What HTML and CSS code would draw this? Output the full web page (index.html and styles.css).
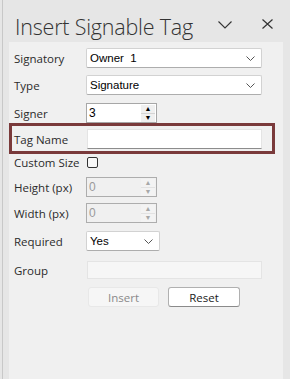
FILE: index.html
```html
<!DOCTYPE html>
<html lang="en">
<head>
    <meta charset="UTF-8">
    <meta name="viewport" content="width=device-width, initial-scale=1.0">
    <title>Insert Signable Tag</title>
    <link rel="stylesheet" href="styles.css">
</head>
<body>
  <div class="pane">
    <div class="header">
      <h1 class="title">Insert Signable Tag</h1>
      <span class="icon chevron">
        <svg width="14" height="8" viewBox="0 0 14 8"><polyline points="0.5,0.5 7,7 13.5,0.5" fill="none" stroke="#333" stroke-width="1.1"/></svg>
      </span>
      <span class="icon close">
        <svg width="11" height="10" viewBox="0 0 11 10"><path d="M0.5 0.5 L10.5 9.5 M10.5 0.5 L0.5 9.5" fill="none" stroke="#333" stroke-width="1.2"/></svg>
      </span>
    </div>

    <div class="panel">
      <div class="row r-signatory">
        <label class="lbl">Signatory</label>
        <div class="select wide"><span>Owner&nbsp; 1</span>
          <svg class="caret" width="9" height="5" viewBox="0 0 9 5"><polyline points="0.5,0.5 4.5,4.5 8.5,0.5" fill="none" stroke="#555" stroke-width="1"/></svg>
        </div>
      </div>
      <div class="row r-type">
        <label class="lbl">Type</label>
        <div class="select wide"><span>Signature</span>
          <svg class="caret" width="9" height="5" viewBox="0 0 9 5"><polyline points="0.5,0.5 4.5,4.5 8.5,0.5" fill="none" stroke="#555" stroke-width="1"/></svg>
        </div>
      </div>
      <div class="row r-signer">
        <label class="lbl">Signer</label>
        <div class="spin">
          <span class="val">3</span>
          <span class="spin-btns">
            <span class="up">&#9650;</span>
            <span class="down">&#9660;</span>
          </span>
        </div>
      </div>

      <div class="tagbox">
        <label class="lbl">Tag Name</label>
        <div class="textin"></div>
      </div>

      <div class="row r-custom">
        <label class="lbl">Custom Size</label>
        <span class="check"></span>
      </div>
      <div class="row r-height">
        <label class="lbl">Height (px)</label>
        <div class="spin disabled">
          <span class="val">0</span>
          <span class="spin-btns">
            <span class="up">&#9650;</span>
            <span class="down">&#9660;</span>
          </span>
        </div>
      </div>
      <div class="row r-width">
        <label class="lbl">Width (px)</label>
        <div class="spin disabled">
          <span class="val">0</span>
          <span class="spin-btns">
            <span class="up">&#9650;</span>
            <span class="down">&#9660;</span>
          </span>
        </div>
      </div>
      <div class="row r-required">
        <label class="lbl">Required</label>
        <div class="select short"><span>Yes</span>
          <svg class="caret" width="9" height="5" viewBox="0 0 9 5"><polyline points="0.5,0.5 4.5,4.5 8.5,0.5" fill="none" stroke="#555" stroke-width="1"/></svg>
        </div>
      </div>
      <div class="row r-group">
        <label class="lbl">Group</label>
        <div class="groupin"></div>
      </div>
      <div class="buttons">
        <button class="btn insert" disabled>Insert</button>
        <button class="btn reset">Reset</button>
      </div>
    </div>
  </div>
</body>
</html>
```

FILE: styles.css
```css
html, body {
    margin: 0;
    padding: 0;
    background-color: #e6e6e6;
    font-family: "Open Sans", "Noto Sans", sans-serif;
    color: #333;
  }

  .pane {
    margin-left: 2px;
    height: 379px;
    border-left: 1px solid #c8c8c8;
    display: flex;
    flex-direction: column;
    box-sizing: border-box;
  }

  .header {
    height: 42px;
    display: flex;
    align-items: flex-start;
  }

  .title {
    margin: 13px 0 0 12px;
    font-size: 21.5px;
    font-weight: 300;
    color: #333;
    letter-spacing: -0.2px;
    line-height: 28px;
    white-space: nowrap;
  }

  .icon {
    display: block;
    line-height: 0;
  }

  .chevron {
    margin: 21px 0 0 auto;
  }

  .close {
    margin: 19px 17px 0 30px;
  }

  .panel {
    margin-left: 6px;
    width: 274px;
    flex: 1;
    background-color: #f0f0f0;
    padding-top: 6px;
    box-sizing: border-box;
  }

  .row {
    display: flex;
    align-items: center;
    height: 20px;
    padding-left: 5px;
  }

  .lbl {
    width: 72px;
    font-size: 11.5px;
    color: #2b2b2b;
    white-space: nowrap;
  }

  .r-type { margin-top: 7px; }
  .r-signer { margin-top: 8px; }
  .r-custom { margin-top: 2px; height: 12px; }
  .r-height { margin-top: 9px; }
  .r-width { margin-top: 6px; }
  .r-required { margin-top: 8px; }
  .r-group { margin-top: 10px; height: 18px; }

  .select {
    height: 20px;
    box-sizing: border-box;
    background-color: #fff;
    border: 1px solid #d2d2d2;
    border-bottom-color: #adadad;
    border-radius: 2px;
    display: flex;
    align-items: center;
    padding-left: 3px;
    padding-right: 6px;
    font-family: "Liberation Sans", Arial, sans-serif;
    font-size: 11.5px;
    color: #000;
  }

  .select.wide { width: 176px; }
  .select.short { width: 74px; }

  .select .caret {
    margin-left: auto;
  }

  .spin {
    width: 71px;
    height: 20px;
    box-sizing: border-box;
    border: 1px solid #a7a7a7;
    background-color: #fff;
    display: flex;
    font-family: "Liberation Sans", Arial, sans-serif;
    font-size: 12px;
    color: #000;
  }

  .spin .val {
    flex: 1;
    padding-left: 2px;
    line-height: 18px;
  }

  .spin-btns {
    width: 14px;
    margin: 1px 1px 1px 0;
    display: flex;
    flex-direction: column;
  }

  .spin-btns span {
    flex: 1;
    font-size: 7px;
    line-height: 8px;
    text-align: center;
    background-color: #f0f0f0;
    border: 0 solid #d4d4d4;
    color: #000;
  }

  .spin-btns .up { border-bottom-width: 1px; }

  .spin.disabled {
    background-color: #f0f0f0;
    color: #9a9a9a;
    border-color: #adadad;
  }

  .spin.disabled .spin-btns span {
    color: #a8a8a8;
    background-color: #f3f3f3;
    border-color: #e2e2e2;
  }

  .tagbox {
    margin-top: 0;
    width: 266px;
    height: 31px;
    box-sizing: border-box;
    border: 3px solid #7a3a3b;
    display: flex;
    align-items: center;
    padding-left: 2px;
    padding-top: 1px;
  }

  .textin {
    width: 175px;
    height: 20px;
    box-sizing: border-box;
    margin-left: 1px;
    background-color: #fff;
    border: 1px solid #e4e4e4;
    border-bottom-color: #8c8c8c;
  }

  .check {
    width: 11px;
    height: 11px;
    margin-left: 1px;
    box-sizing: border-box;
    border: 1px solid #333;
    border-radius: 2px;
    background-color: #f8f8f8;
  }

  .groupin {
    width: 175px;
    height: 18px;
    margin-left: 1px;
    box-sizing: border-box;
    background-color: #f6f6f6;
    border: 1px solid #e4e4e4;
  }

  .buttons {
    margin-top: 8px;
    padding-left: 79px;
    display: flex;
    gap: 9px;
  }

  .btn {
    width: 72px;
    height: 20px;
    padding: 0;
    box-sizing: border-box;
    border-radius: 3px;
    font-family: "Open Sans", "Noto Sans", sans-serif;
    font-size: 11.5px;
  }

  .btn.insert {
    width: 71px;
    background-color: #f6f6f6;
    border: 1px solid #e8e8e8;
    color: #8a8a8a;
  }

  .btn.reset {
    background-color: #fff;
    border: 1px solid #b0b0b0;
    border-bottom-color: #8a8a8a;
    color: #222;
  }
```
